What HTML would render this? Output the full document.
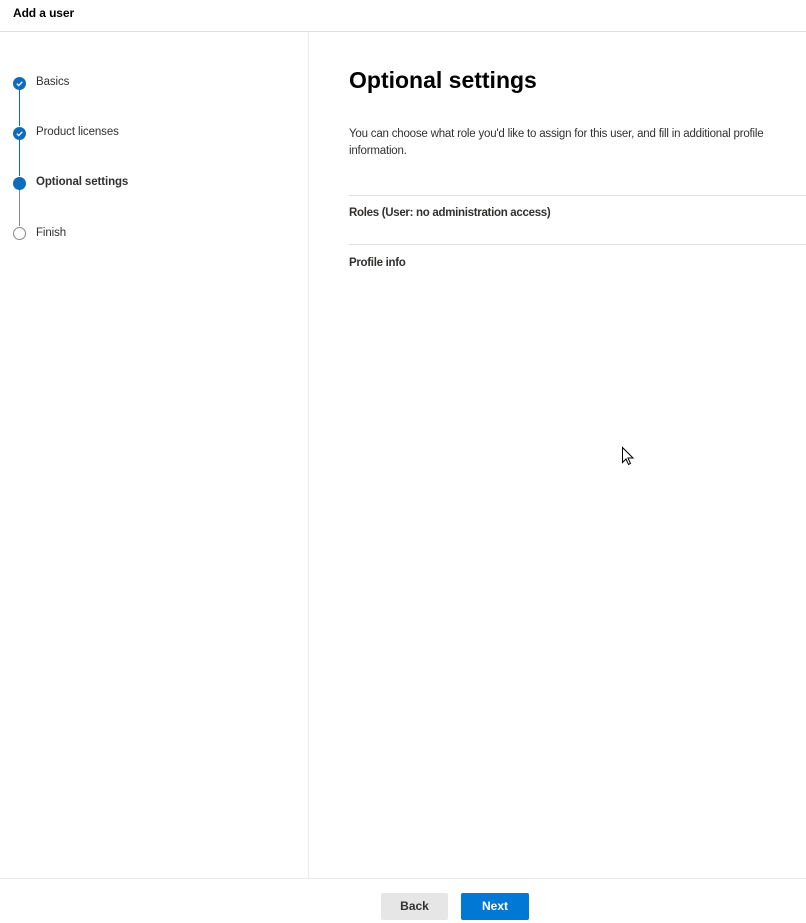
<!DOCTYPE html>
<html><head><meta charset="utf-8"><style>
*{box-sizing:border-box;margin:0;padding:0}
body{width:806px;height:923px;background:#fff;font-family:"Liberation Sans",sans-serif;color:#323130;position:relative;overflow:hidden}
.hdr{position:absolute;left:0;top:0;width:806px;height:32px;border-bottom:1px solid #e1dfdd}
.hdr span{position:absolute;left:13px;top:6px;font-size:12px;font-weight:bold;color:#000;letter-spacing:-0.1px}
.side{position:absolute;left:308px;top:32px;width:1px;height:846px;background:#edebe9}
.step{position:absolute;left:36px;font-size:11.5px;color:#323130;letter-spacing:-0.1px}
.dot{position:absolute;left:13px;width:13px;height:13px;border-radius:50%;background:#0f6cbd}
.line{position:absolute;left:19px;width:1px}
h1{position:absolute;left:349px;top:67px;font-size:23px;font-weight:bold;color:#000}
.desc{position:absolute;left:349px;top:126px;font-size:11.5px;line-height:17px;color:#323130;width:456px;letter-spacing:-0.2px}
.sep{position:absolute;left:349px;width:457px;height:1px;background:#e1dfdd}
.sec{position:absolute;left:349px;font-size:11.5px;font-weight:bold;color:#323130;letter-spacing:-0.3px}
.foot{position:absolute;left:0;top:878px;width:806px;height:1px;background:#edebe9}
.btn{position:absolute;top:893px;height:27px;border-radius:2px;font-size:12px;font-weight:bold;text-align:center;line-height:27px}
</style></head><body>
<div class="hdr"><span>Add a user</span></div>
<div class="side"></div>
<div class="line" style="top:90px;height:36px;background:#0f6cbd"></div>
<div class="line" style="top:140px;height:36px;background:#0f6cbd"></div>
<div class="line" style="top:190px;height:36px;background:#8a8886"></div>
<div class="dot" style="top:77px"><svg width="13" height="13" viewBox="0 0 13 13"><path d="M3.8 6.7l1.9 1.9 3.6-3.8" stroke="#fff" stroke-width="1.3" fill="none"/></svg></div>
<div class="dot" style="top:127px"><svg width="13" height="13" viewBox="0 0 13 13"><path d="M3.8 6.7l1.9 1.9 3.6-3.8" stroke="#fff" stroke-width="1.3" fill="none"/></svg></div>
<div class="dot" style="top:177px"></div>
<div class="dot" style="top:227px;background:#fff;border:1.5px solid #8a8886"></div>
<div class="step" style="top:76px">Basics</div>
<div class="step" style="top:126px">Product licenses</div>
<div class="step" style="top:176px;font-weight:bold">Optional settings</div>
<div class="step" style="top:227px">Finish</div>
<h1>Optional settings</h1>
<div class="desc">You can choose what role you'd like to assign for this user, and fill in additional profile information.</div>
<div class="sep" style="top:195px"></div>
<div class="sec" style="top:207px">Roles (User: no administration access)</div>
<div class="sep" style="top:244px"></div>
<div class="sec" style="top:257px">Profile info</div>
<svg style="position:absolute;left:621px;top:446px" width="14" height="22" viewBox="0 0 14 22"><path d="M1.5 1.5v15l3.5-3.5 2.5 5.5 2-1-2.5-5.5h5z" fill="#fff" stroke="#000" stroke-width="1"/></svg>
<div class="foot"></div>
<div class="btn" style="left:381px;width:67px;background:#e6e6e6;color:#323130">Back</div>
<div class="btn" style="left:461px;width:68px;background:#0078d4;color:#fff">Next</div>
</body></html>
